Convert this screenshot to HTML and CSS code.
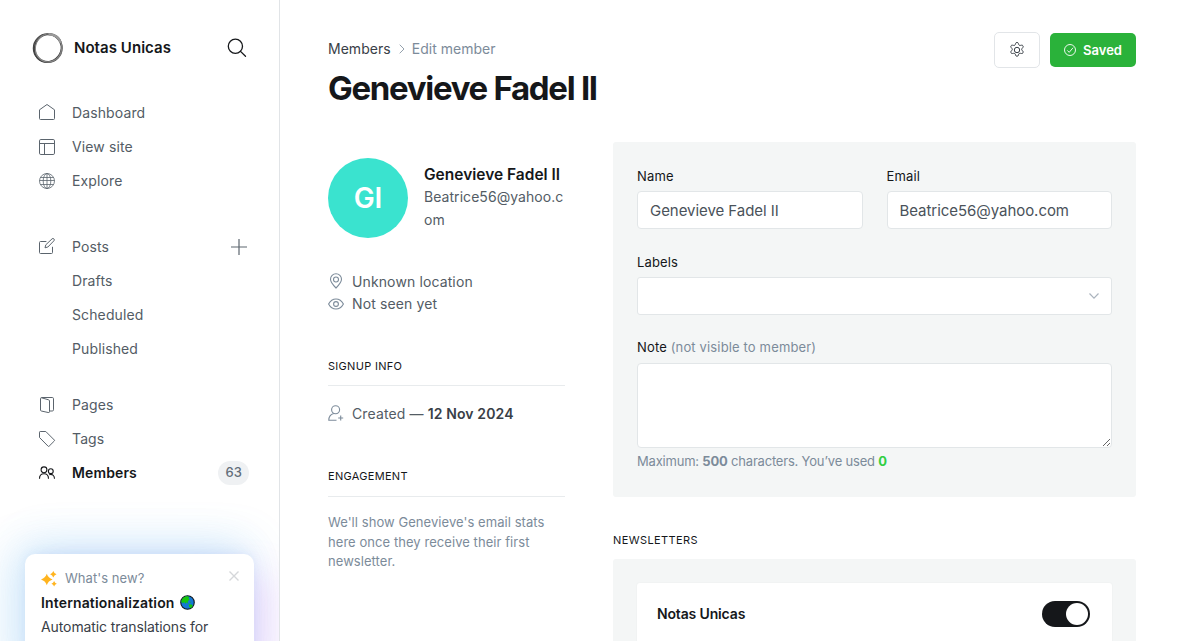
FILE: index.html
```html
<!DOCTYPE html>
<html lang="en">
<head>
<meta charset="utf-8">
<title>Notas Unicas</title>
<link rel="stylesheet" href="styles.css">
</head>
<body>
<div class="app">
  <nav class="sidebar">
    <header class="site">
      <svg class="site-logo" viewBox="0 0 32 32" fill="none" stroke="#444">
        <circle cx="15.600" cy="16.200" r="14" stroke-width="1.700"/>
        <circle cx="16.400" cy="16.200" r="13.600" stroke="#777" stroke-width="1.500"/>
        <ellipse cx="16" cy="16" rx="14.600" ry="13" transform="rotate(-50 16 16)" stroke-width="1.300"/>
        <ellipse cx="16.500" cy="15.700" rx="13" ry="14.200" transform="rotate(20 16 16)" stroke="#888" stroke-width="1"/>
        <path d="M16.500 2.300c6 .2 10.500 3 12.300 8.500" stroke="#999" stroke-width="2.600"/>
      </svg>
      <span class="site-name">Notas Unicas</span>
      <svg class="search" viewBox="0 0 20 20" fill="none" stroke="#15171a" stroke-width="1.3" stroke-linecap="round"><circle cx="8.4" cy="8.3" r="7.1"/><path d="M13.5 13.4l5 4.9"/></svg>
    </header>
    <ul class="menu">
      <li class="item"><svg class="icon raised" viewBox="0 0 16 16"><path d="M.5 5.800L8 .500l7.500 5.300v8.700a1 1 0 0 1-1 1H1.500a1 1 0 0 1-1-1z"/></svg><span class="label">Dashboard</span></li>
      <li class="item"><svg class="icon" viewBox="0 0 16 16"><rect x=".5" y=".5" width="15" height="15" rx="1.300"/><path d="M.5 4.500h15M5.500 4.500v11"/></svg><span class="label">View site</span></li>
      <li class="item"><svg class="icon icon-thin" viewBox="0 0 16 16"><circle cx="8" cy="8" r="7.500"/><ellipse cx="8" cy="8" rx="3.800" ry="7.500"/><path d="M.5 7.500h15M1.500 4.500h13M1.500 11.500h13M8 .500v15"/></svg><span class="label">Explore</span></li>
    </ul>
    <ul class="menu menu-posts">
      <li class="item"><svg class="icon raised" viewBox="0 0 16 16"><path d="M7.400 3.500H1.500a1 1 0 0 0-1 1v10a1 1 0 0 0 1 1h11a1 1 0 0 0 1-1V8.800"/><path d="M6 9.800l.8-3L13 .9a1.300 1.300 0 0 1 1.900 1.900L8.900 9z"/></svg><span class="label">Posts</span>
        <svg class="plus" viewBox="0 0 16 16"><path d="M8 0v16M0 8h16"/></svg></li>
      <li class="item sub"><span class="label">Drafts</span></li>
      <li class="item sub"><span class="label">Scheduled</span></li>
      <li class="item sub"><span class="label">Published</span></li>
    </ul>
    <ul class="menu menu-content">
      <li class="item"><svg class="icon" viewBox="0 0 16 16"><path d="M1.500 1.700v11.300a1 1 0 0 0 .8 1l6.900 1.500a1 1 0 0 0 1.300-1V4a1.200 1.200 0 0 0-.9-1.200L2.600.8a.9.9 0 0 0-1.100.9z"/><path d="M2.400.500h10.900a1.200 1.200 0 0 1 1.200 1.200v11.100a1.200 1.200 0 0 1-1.200 1.200h-2.800"/></svg><span class="label">Pages</span></li>
      <li class="item"><svg class="icon" viewBox="0 0 16 16"><path d="M.5 1.200v5.300l8.600 8.700a.7.700 0 0 0 1 0l5.200-5.200a.7.700 0 0 0 0-1L6.800.500H1.200a.7.700 0 0 0-.7.700z"/></svg><span class="label">Tags</span></li>
      <li class="item active"><svg class="icon" viewBox="0 0 16 16"><circle cx="5" cy="4.800" r="2.900"/><path d="M.5 13.800c0-3.200 1.900-5 4.500-5s4.500 1.800 4.500 5"/><circle cx="11.800" cy="6.200" r="2.400"/><path d="M10.300 9.600c2.900-.9 5.200 1 5.200 4.200"/></svg><span class="label">Members</span><span class="count">63</span></li>
    </ul>
    <aside class="news">
      <div class="news-head">
        <svg class="sparkles" viewBox="0 0 16 16"><path d="M5.800 2.800Q7.200 7.100 11.600 8.500Q7.200 9.900 5.800 14.200Q4.400 9.900 0 8.500Q4.400 7.100 5.800 2.800z"/><path d="M12.300 0Q13.100 2.400 15.500 3.200Q13.100 4 12.300 6.400Q11.500 4 9.100 3.200Q11.500 2.400 12.300 0z"/><path d="M13.100 10Q13.800 12 15.800 12.700Q13.800 13.400 13.100 15.500Q12.400 13.400 10.400 12.700Q12.400 12 13.100 10z"/></svg>
        <span>What's new?</span>
        <svg class="close" viewBox="0 0 10 10"><path d="M.5.5l9 9M9.500.5l-9 9"/></svg>
      </div>
      <div class="news-title">Internationalization
        <svg class="earth" viewBox="0 0 16 16"><circle cx="8" cy="8" r="7.200" fill="#1477d4" stroke="#101820" stroke-width="1.200"/><path d="M1.400 7.500C1.600 4 4.500 1.200 8 1.400l2 1.100-1 1.300 1.300 1.100-2 1.800.3 2-1.500-1-1.200 1.600-1.400-1.800-1.100 1.300z" fill="#16c60c"/><path d="M9.500 9.800l3.100.4 1 1.400-2 2.500-2-1.600zM8 9l1 .4-.5.8zM11 7l.8.6-.8.8z" fill="#16c60c"/></svg>
      </div>
      <p class="news-text">Automatic translations for<br>Ghost now in beta</p>
    </aside>
  </nav>

  <main class="main">
    <header class="page-head">
      <div>
        <div class="crumbs"><span>Members</span><svg class="chevron" viewBox="0 0 6 10"><path d="M.7.700L5 5 .7 9.300"/></svg><span class="crumb-current">Edit member</span></div>
        <h1 class="title">Genevieve Fadel II</h1>
      </div>
      <div class="actions">
        <button class="btn btn-gear"><svg class="gear" viewBox="0 0 16 16"><circle cx="8" cy="8" r="2.700"/><path d="M6.600 1.500a1.450 1.450 0 0 1 2.800 0l.3 1a1.400 1.400 0 0 0 1.700.9l1-.2a1.450 1.450 0 0 1 1.400 2.400l-.7.8a1.400 1.400 0 0 0 0 1.900l.7.800a1.450 1.450 0 0 1-1.400 2.400l-1-.2a1.400 1.400 0 0 0-1.700.9l-.3 1a1.450 1.450 0 0 1-2.800 0l-.3-1a1.400 1.400 0 0 0-1.700-.9l-1 .2a1.450 1.450 0 0 1-1.400-2.400l.7-.8a1.400 1.400 0 0 0 0-1.900l-.7-.8a1.450 1.450 0 0 1 1.400-2.400l1 .2a1.400 1.400 0 0 0 1.700-.9z"/></svg></button>
        <button class="btn btn-saved"><svg class="check" viewBox="0 0 12 12"><circle cx="6" cy="6" r="5.500"/><path d="M3.300 6.400l1.900 1.900 3.900-4.600"/></svg><span>Saved</span></button>
      </div>
    </header>

    <div class="columns">
      <section class="details">
        <div class="profile">
          <div class="avatar">GI</div>
          <div class="identity"><h3 class="name">Genevieve Fadel II</h3><p class="email">Beatrice56@yahoo.com</p></div>
        </div>
        <div class="facts">
          <p class="fact"><svg class="fact-icon raised" viewBox="0 0 16 16"><path d="M8 15C5.500 12.500 2.500 9.500 2.500 6.300a5.500 5.500 0 0 1 11 0C13.500 9.500 10.500 12.500 8 15z"/><circle cx="8" cy="6.500" r="2.500"/></svg><span class="label">Unknown location</span></p>
          <p class="fact"><svg class="fact-icon" viewBox="0 0 16 16"><path d="M.6 8C2.300 4.800 4.900 3 8 3s5.700 1.800 7.400 5c-1.700 3.200-4.300 5-7.400 5S2.300 11.200.6 8z"/><circle cx="8" cy="8" r="2.400"/></svg><span class="label">Not seen yet</span></p>
        </div>
        <h4 class="heading">Signup info</h4>
        <p class="fact created"><svg class="fact-icon raised" viewBox="0 0 16 16"><circle cx="7.600" cy="4.700" r="4"/><path d="M5.800 8.500C2.800 9.300.8 11.200.8 15.200H8.500M12.700 10.500v5M10.200 13h5"/></svg><span class="label">Created — <b>12 Nov 2024</b></span></p>
        <h4 class="heading engagement">Engagement</h4>
        <p class="hint">We'll show Genevieve's email stats here once they receive their first newsletter.</p>
      </section>

      <section class="forms">
        <form class="panel">
          <div class="pair">
            <label class="field">Name<input class="input" type="text" value="Genevieve Fadel II"></label>
            <label class="field">Email<input class="input" type="text" value="Beatrice56@yahoo.com"></label>
          </div>
          <div class="field">Labels<div class="input select"><svg class="arrow" viewBox="0 0 10 6"><path d="M.5.500L5 5.200 9.500.500"/></svg></div></div>
          <div class="field field-note"><span>Note <span class="muted">(not visible to member)</span></span><textarea class="input note"></textarea></div>
          <p class="limit">Maximum: <b>500</b> characters. You’ve used <b class="used">0</b></p>
        </form>
        <h4 class="section-title">Newsletters</h4>
        <div class="panel">
          <div class="newsletter"><span>Notas Unicas</span><span class="toggle"></span></div>
        </div>
      </section>
    </div>
  </main>
</div>
</body>
</html>
```

FILE: styles.css
```css
* { box-sizing: border-box; }
body, h1, h3, h4, p, ul { margin: 0; padding: 0; }
body {
  height: 641px;
  overflow: hidden;
  background: #fff;
  color: #15171a;
  font-family: Inter, "Liberation Sans", sans-serif;
  font-size: 14px;
}
svg { display: block; flex: none; overflow: visible; fill: none; }
.app { display: flex; height: 641px; overflow: hidden; }
.label { padding-bottom: 2px; }

.sidebar {
  width: 280px;
  flex: none;
  overflow: hidden;
  border-right: 1px solid #e1e4e7;
  padding: 32px 25px 0;
}
.site { display: flex; align-items: center; height: 32px; padding: 0 8px 0 7px; }
.site-logo { width: 32px; height: 32px; }
.site-name { flex: 1; margin-left: 10px; font-size: 15px; font-weight: 600; line-height: 18px; letter-spacing: 0.05px; }
.search { width: 20px; height: 20px; margin-right: -1px; }
.menu { list-style: none; margin-top: 32px; }
.item {
  display: flex;
  align-items: center;
  height: 34px;
  padding: 0 7px 0 14px;
  color: #535c65;
  font-size: 14px;
  letter-spacing: 0.12px;
}
.icon { width: 16px; height: 16px; margin-right: 17px; stroke: #5b646d; stroke-width: 1; }
.icon-thin { stroke-width: 0.8; }
.icon.raised { margin-top: -2px; }
.sub { padding-left: 47px; }
.plus { width: 16px; height: 16px; margin-left: auto; stroke: #5d666f; stroke-width: 1.2; }
.active { padding-right: 5px; color: #15171a; font-weight: 600; }
.active .icon { stroke: #15171a; stroke-width: 1.1; }
.count {
  margin-left: auto;
  height: 24px;
  padding: 0 7px;
  border-radius: 12px;
  background: #eff1f3;
  color: #626d79;
  font-size: 13px;
  font-weight: 500;
  line-height: 23px;
}
.menu-content { margin-top: 22px; }

.news {
  height: 130px;
  margin-top: 64px;
  padding: 16px;
  border-radius: 10px;
  background: #fff;
  box-shadow: 0 -2px 10px rgba(90, 140, 220, 0.08), 26px 14px 38px -6px rgba(190, 90, 240, 0.16), -16px -2px 46px rgba(60, 160, 235, 0.17), 0 -12px 42px rgba(90, 170, 240, 0.17);
}
.news-head { display: flex; align-items: center; height: 17px; color: #7c8b9a; font-size: 13px; line-height: 16px; letter-spacing: 0.05px; }
.news-head span { padding-bottom: 1px; }
.sparkles { width: 16px; height: 16px; margin-right: 8px; fill: #ffb41f; }
.close { width: 10px; height: 10px; margin: -6px -1px 0 auto; stroke: #d5d7da; stroke-width: 1.4; }
.news-title { display: flex; align-items: center; height: 20px; margin-top: 5px; font-size: 14px; font-weight: 600; letter-spacing: 0.15px; }
.earth { width: 15px; height: 15px; margin-left: 5px; }
.news-text { margin-top: 5px; color: #394047; font-size: 14px; line-height: 20px; letter-spacing: -0.1px; }

.main { flex: 1; padding: 32px 48px 0; }
.page-head { display: flex; justify-content: space-between; height: 110px; }
.crumbs { display: flex; align-items: center; height: 32px; padding-top: 1px; color: #394047; font-size: 14px; letter-spacing: 0.03px; }
.chevron { width: 6px; height: 10px; margin: 0 7px 0 8px; stroke: #95a1ad; stroke-width: 1; }
.crumb-current { color: #7c8b9a; }
.title { margin-top: 3px; font-size: 33px; font-weight: 700; line-height: 42px; letter-spacing: -1.3px; }
.actions { display: flex; gap: 10px; height: 36px; align-items: center; }
.btn {
  display: flex;
  align-items: center;
  justify-content: center;
  border: 1px solid #e2e5e8;
  border-radius: 5px;
  background: #fff;
  font: 600 13px Inter, sans-serif;
}
.btn-gear { width: 46px; height: 36px; }
.gear { width: 16px; height: 16px; stroke: #394047; stroke-width: 1; }
.btn-saved { width: 86px; height: 34px; border: 0; background: #2ab23a; color: #fff; gap: 7px; }
.check { width: 12px; height: 12px; stroke: #fff; stroke-width: 0.9; }

.columns { display: flex; gap: 48px; }
.details { width: 237px; flex: none; padding-top: 16px; }
.profile { display: flex; gap: 16px; }
.avatar {
  width: 80px;
  height: 80px;
  flex: none;
  border-radius: 50%;
  background: #3ae3cf;
  color: #fff;
  font-size: 28px;
  font-weight: 600;
  line-height: 80px;
  text-align: center;
}
.identity { min-width: 0; padding-top: 5px; }
.name { font-size: 15.5px; font-weight: 600; line-height: 22px; padding-top: 1px; }
.email { margin-top: -1px; color: #535c65; font-size: 14px; line-height: 23px; letter-spacing: 0.05px; word-break: break-all; }
.facts { margin-top: 33px; }
.fact { display: flex; align-items: center; gap: 8px; height: 22px; color: #535c65; font-size: 14px; letter-spacing: 0.12px; }
.fact b { color: #394047; font-weight: 600; }
.fact-icon { width: 16px; height: 16px; stroke: #7c8b9a; stroke-width: 1.1; }
.fact-icon.raised { margin-top: -2px; }
.heading { margin-top: 41px; padding-bottom: 9px; border-bottom: 1px solid #e8ebed; font-size: 11px; font-weight: 400; line-height: 20px; letter-spacing: 0.3px; text-transform: uppercase; }
.created { margin-top: 17px; }
.engagement { padding-bottom: 10px; }
.hint { margin-top: 16px; color: #7c8b9a; font-size: 13px; line-height: 19.5px; letter-spacing: 0.06px; }

.forms { flex: 1; min-width: 0; }
.panel { padding: 24px; border-radius: 3px; background: #f4f6f6; }
.pair { display: grid; grid-template-columns: 1fr 1fr; gap: 24px; }
.field { display: block; margin-bottom: 23px; font-size: 13px; font-weight: 400; line-height: 20px; letter-spacing: 0.15px; }
.field > .input { margin-top: 5px; }
.field.field-note { margin-top: -1px; }
.field-note > .note { margin-top: 6px; }
.muted { color: #7c8b9a; }
.input {
  display: block;
  width: 100%;
  height: 38px;
  padding: 0 12px;
  border: 1px solid #e2e6e8;
  border-radius: 4px;
  background: #fff;
  color: #4a525a;
  font: 400 15px Inter, sans-serif;
  letter-spacing: -0.05px;
  outline: none;
}
.select { display: flex; align-items: center; justify-content: flex-end; border-radius: 3px; }
.arrow { width: 10px; height: 6px; stroke: #abb4be; stroke-width: 1.2; }
.note { height: 85px; }
.limit { margin-top: -20px; color: #7c8b9a; font-size: 13px; line-height: 20px; letter-spacing: -0.2px; padding-bottom: 2px; }
.limit b { font-weight: 700; }
.limit .used { color: #30cf43; }
.section-title { margin: 33px 0 9px; font-size: 11px; font-weight: 400; line-height: 20px; letter-spacing: 0.4px; text-transform: uppercase; }
.newsletter {
  display: flex;
  justify-content: space-between;
  height: 74px;
  padding: 18px 22px 0 20px;
  border-radius: 3px;
  background: #fff;
  box-shadow: 0 0 2px rgba(0, 0, 0, 0.05);
  font-size: 14px;
  font-weight: 600;
  line-height: 26px;
  letter-spacing: -0.15px;
}
.toggle { width: 48px; height: 26px; padding: 2px; border-radius: 13px; background: #15171a; }
.toggle::before { content: ""; display: block; width: 22px; height: 22px; margin-left: 22px; border-radius: 50%; background: #fff; }
```
